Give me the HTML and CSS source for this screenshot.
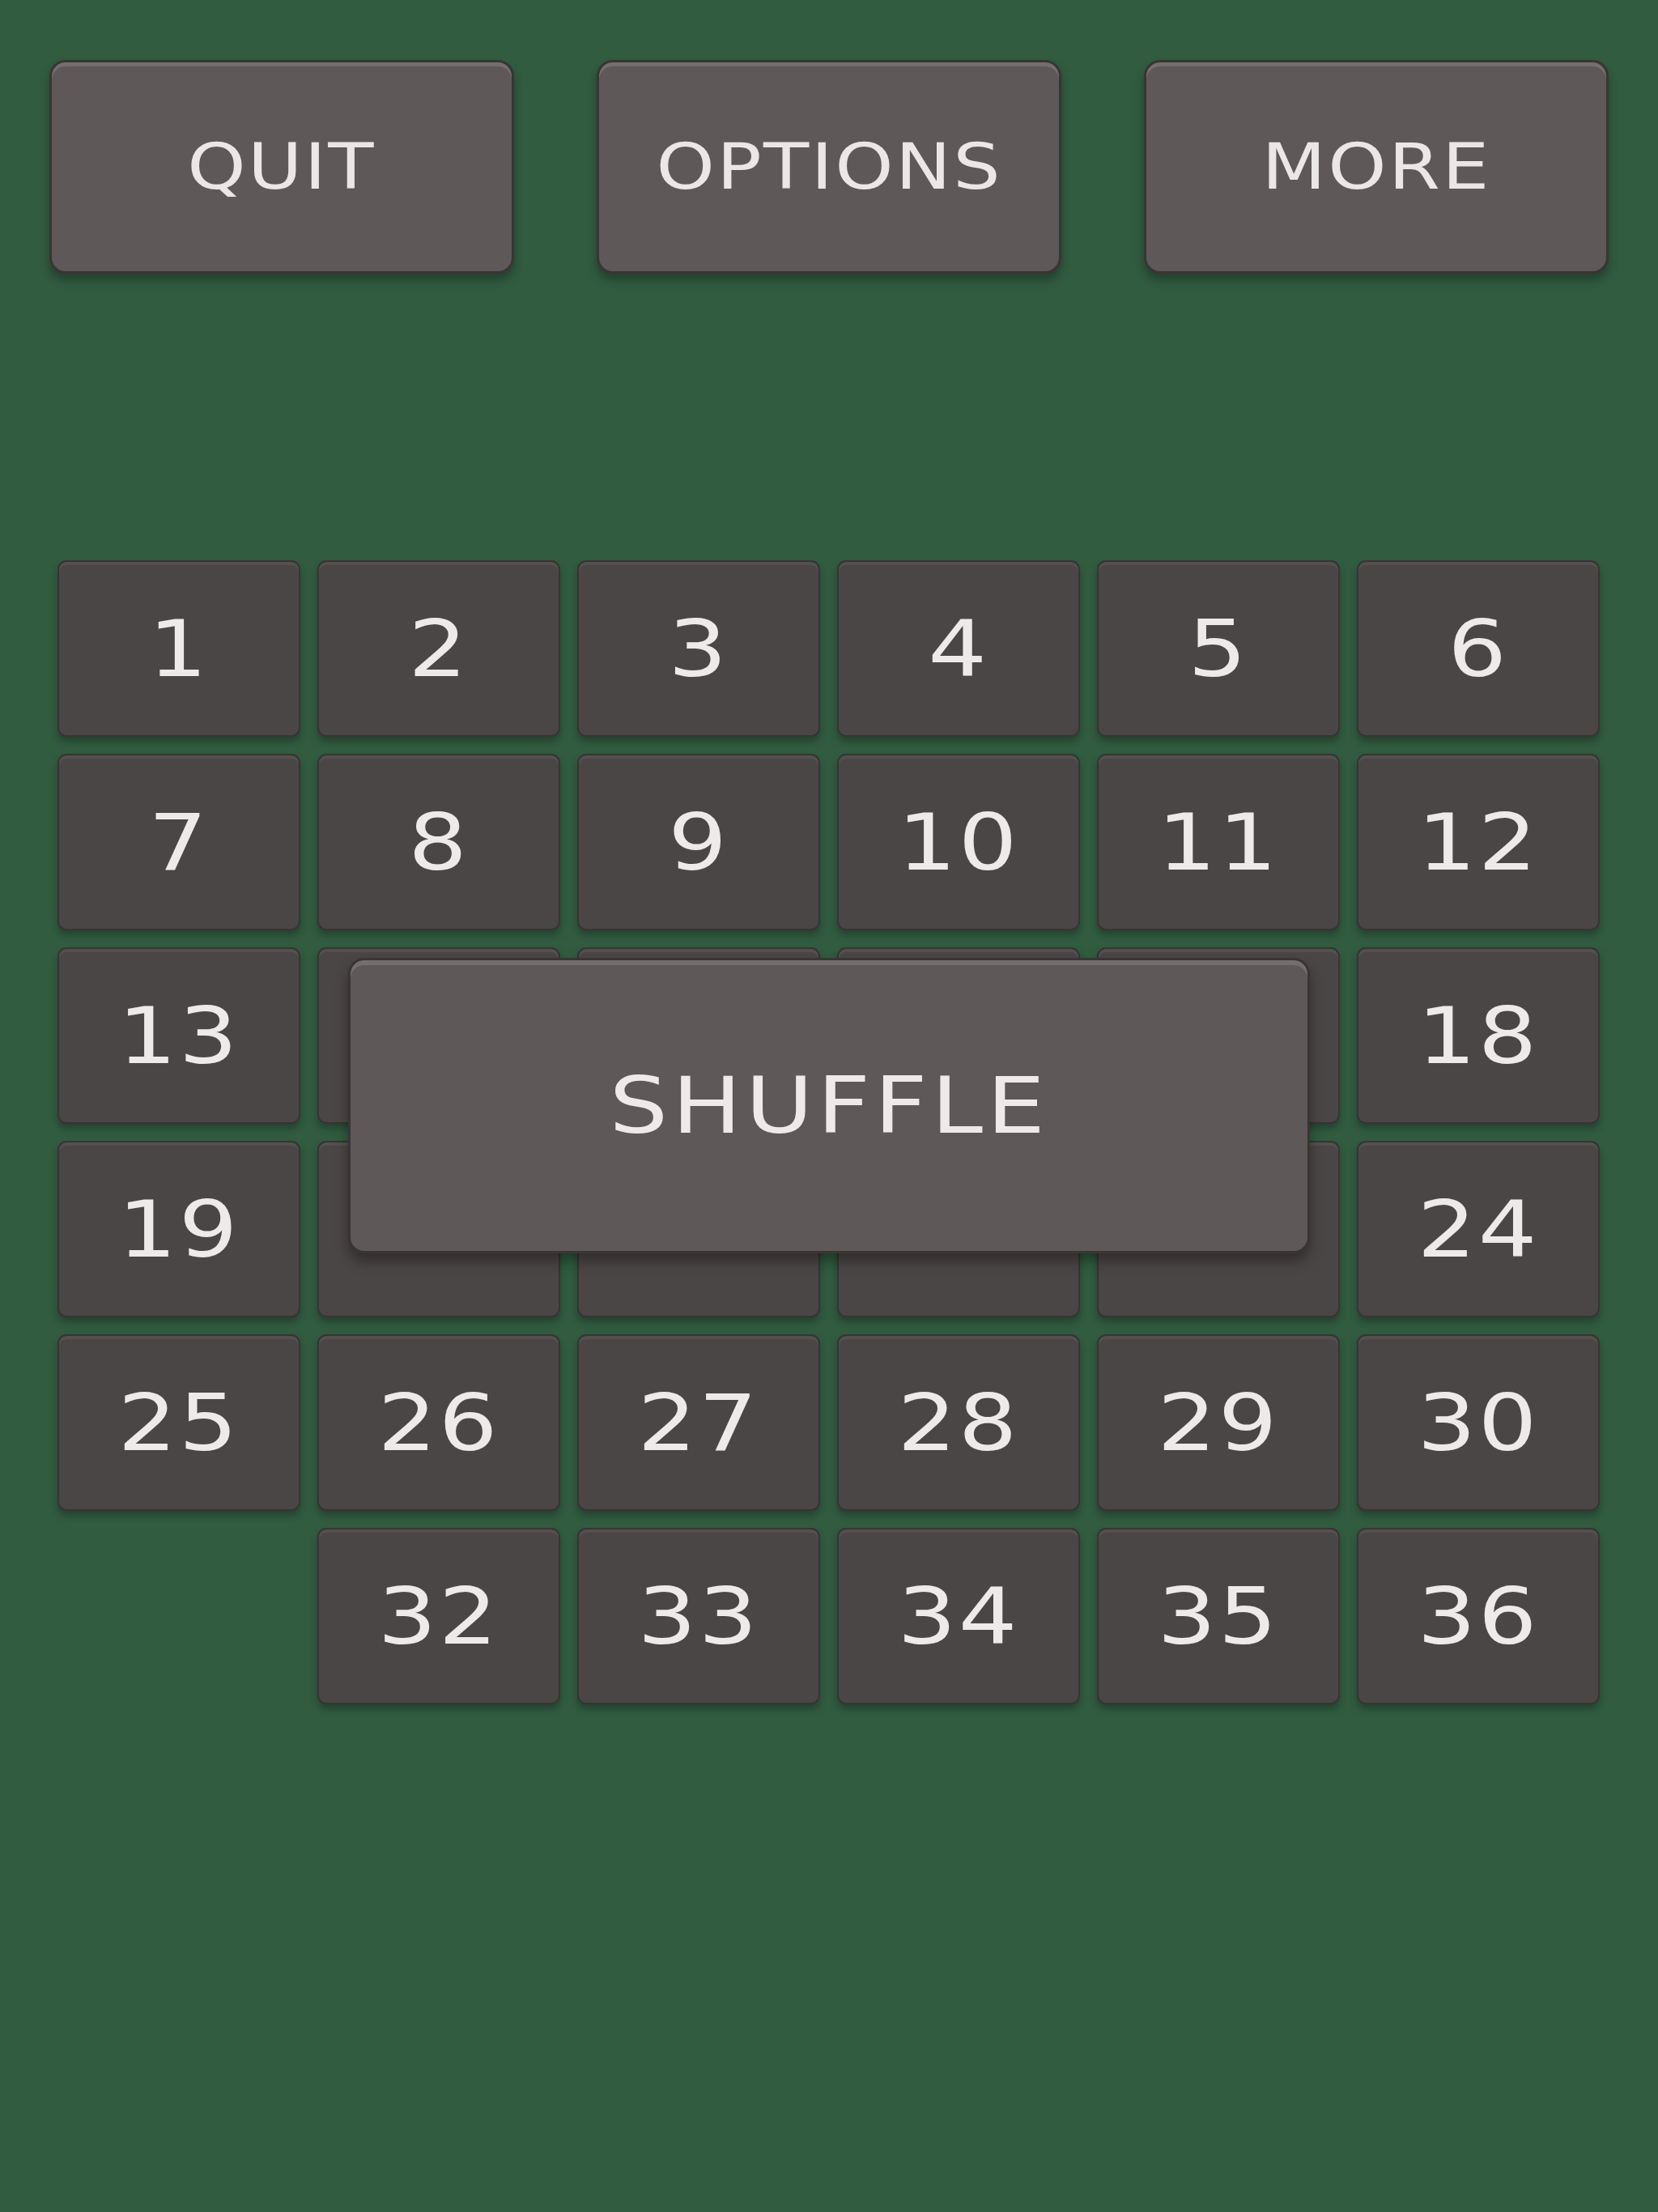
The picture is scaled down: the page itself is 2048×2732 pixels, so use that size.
FILE: index.html
```html
<!DOCTYPE html>
<html lang="en">
<head>
  <meta charset="UTF-8" />
  <title>Shuffle Board</title>
  <link rel="stylesheet" href="styles.css">
</head>
<body>
  <div class="top-bar">
    <button class="menu-btn"><span class="label">QUIT</span></button>
    <button class="menu-btn"><span class="label">OPTIONS</span></button>
    <button class="menu-btn"><span class="label">MORE</span></button>
  </div>

  <div class="board">
    <div class="grid" id="grid"></div>
    <button class="shuffle-btn"><span class="label">SHUFFLE</span></button>
  </div>

  <script>
    const grid = document.getElementById("grid");
    // tiles under the shuffle button show no number
    const covered = [14, 15, 16, 17, 20, 21, 22, 23];
    for (let i = 1; i <= 36; i++) {
      const tile = document.createElement("div");
      tile.className = "tile";
      if (i === 31) {
        tile.className = "tile empty";
      } else if (!covered.includes(i)) {
        const num = document.createElement("span");
        num.className = "label";
        num.innerText = i;
        tile.appendChild(num);
      }
      grid.appendChild(tile);
    }
  </script>
</body>
</html>
```

FILE: styles.css
```css
body {
  margin: 0;
  background: #315c40;
  font-family: "DejaVu Sans", "Liberation Sans", sans-serif;
  color: #eeeaea;
  height: 2732px;
}
.label {
  display: inline-block;
  transform: scaleX(1.18);
}
.top-bar {
  display: flex;
  gap: 102px;
  padding: 74px 61px 0;
}
.menu-btn {
  width: 574px;
  height: 264px;
  background: #5e5858;
  border: 3px solid #3a3535;
  border-radius: 20px;
  box-shadow: inset 0 5px 0 rgba(255, 255, 255, 0.14), 0 8px 12px rgba(0, 0, 0, 0.3);
  color: #ebe7e7;
  font-family: inherit;
  font-size: 78px;
  letter-spacing: 2px;
  padding: 0;
}
.board {
  position: relative;
  margin: 354px 0 0 71px;
  width: 1905px;
}
.grid {
  display: grid;
  grid-template-columns: repeat(6, 300px);
  grid-auto-rows: 218px;
  gap: 21px;
}
.tile {
  box-sizing: border-box;
  background: #4b4646;
  border: 2px solid #383434;
  border-radius: 11px;
  box-shadow: inset 0 4px 0 rgba(255, 255, 255, 0.06), 0 6px 10px rgba(0, 0, 0, 0.28);
  display: flex;
  align-items: center;
  justify-content: center;
  font-size: 97px;
  letter-spacing: 2px;
}
.tile.empty {
  visibility: hidden;
}
.shuffle-btn {
  position: absolute;
  left: 359px;
  top: 491px;
  width: 1188px;
  height: 365px;
  background: #5e5858;
  border: 3px solid #3a3535;
  border-radius: 20px;
  box-shadow: inset 0 6px 0 rgba(255, 255, 255, 0.14), 0 10px 16px rgba(0, 0, 0, 0.35);
  color: #eeeaea;
  font-family: inherit;
  font-size: 97px;
  letter-spacing: 4px;
  padding: 0;
}
```
